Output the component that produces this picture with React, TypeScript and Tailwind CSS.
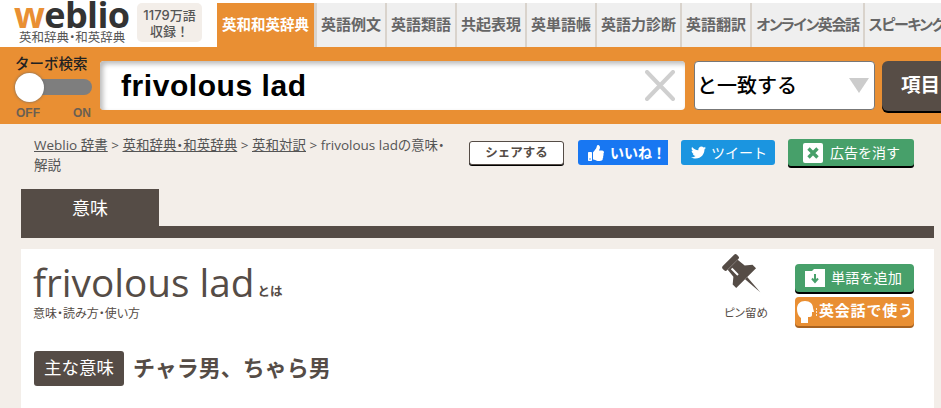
import { FaThumbsUp, FaTwitter } from 'react-icons/fa';

const jp = "font-['Inter','Noto_Sans_CJK_JP',sans-serif]";

const tabs = [
  { label: '英語例文', cls: '' },
  { label: '英語類語', cls: '' },
  { label: '共起表現', cls: '' },
  { label: '英単語帳', cls: '' },
  { label: '英語力診断', cls: '' },
  { label: '英語翻訳', cls: '' },
  { label: 'オンライン英会話', cls: 'tracking-[-1.4px]' },
  { label: 'スピーキング', cls: 'tracking-[-1.4px]' },
];

function Header() {
  return (
    <div className="flex h-[47px] bg-white">
      <div className="w-[137px] shrink-0 pl-[14px]">
        <div className="h-[31px] font-['Open_Sans',sans-serif] text-[36px] leading-[29px] font-bold tracking-[-0.6px] text-[#333]">
          <span className="text-[#e98f33]">w</span>eblio
        </div>
        <div className="pl-[5px] text-[12.5px] leading-[13px] whitespace-nowrap text-[#555] [font-feature-settings:'palt']">英和辞典・和英辞典</div>
      </div>
      <div className="mt-[3px] flex h-[39px] w-[65px] shrink-0 flex-col items-center justify-center rounded-[5px] bg-[#f3eee9] text-[13px] leading-[16px] font-medium text-[#555]">
        <span>1179万語</span>
        <span>収録！</span>
      </div>
      <div className="mt-[3px] ml-[15px] flex h-[44px] min-w-0 flex-1 overflow-hidden">
        <div className="flex w-[97px] shrink-0 items-center justify-center bg-[#e98f33] text-[14.5px] font-bold whitespace-nowrap text-white">
          英和和英辞典
        </div>
        <div className="w-[3px] shrink-0 bg-[#d9d3cc]" />
        {tabs.map((t) => (
          <div
            key={t.label}
            className={`flex shrink-0 items-center border-r-2 border-[#d9d3cc] bg-[#efefef] px-[4px] text-[15px] font-bold whitespace-nowrap text-[#666] [font-feature-settings:'palt'] ${t.cls}`}
          >
            {t.label}
          </div>
        ))}
      </div>
    </div>
  );
}

function SearchBar() {
  return (
    <div className="flex h-[77px] overflow-hidden bg-[#e98f33] pt-[14px] pl-[15px]">
      <div className="w-[85px] shrink-0">
        <div className="-mt-[6px] h-[18px] text-[14.5px] leading-[18px] font-medium whitespace-nowrap text-[#222]">ターボ検索</div>
        <div className="relative mt-[6px] h-[16px] w-[77px] rounded-full bg-[#7e7e7e]">
          <div className="absolute top-[-6px] left-0 h-[29px] w-[29px] rounded-full bg-white shadow-[0_0_3px_#666]" />
        </div>
        <div className="mt-[11px] flex w-[76px] justify-between pl-[1px] font-['Liberation_Sans',sans-serif] text-[12px] leading-[14px] font-bold text-[#6b5f52]">
          <span>OFF</span>
          <span>ON</span>
        </div>
      </div>
      <div className="flex h-[49px] w-[585px] shrink-0 items-center justify-between rounded-[4px] bg-white pr-[10px] pl-[21px] shadow-[inset_3px_3px_5px_#bbb]">
        <span className="font-['Liberation_Sans',sans-serif] text-[30px] font-bold tracking-[0.55px] text-black">frivolous lad</span>
        <svg width="30" height="31" viewBox="0 0 30 31" fill="none">
          <path d="M2 2 L28 29 M28 2 L2 29" stroke="#cfcfcf" strokeWidth="4" strokeLinecap="round" />
        </svg>
      </div>
      <div className="ml-[9px] flex h-[49px] w-[181px] shrink-0 items-center justify-between rounded-[4px] border border-[#777] bg-white pr-[5px] pl-[2px]">
        <span className="text-[20px] font-medium text-black">と一致する</span>
        <svg width="20" height="15" viewBox="0 0 20 15">
          <path d="M0 0 H20 L10 15 Z" fill="#cccccc" />
        </svg>
      </div>
      <div className="ml-[7px] flex h-[50px] w-[90px] shrink-0 items-center rounded-[6px] bg-[#574d46] pl-[19px] text-[19.5px] font-bold text-white shadow-[0_2px_0_#000]">
        項目
      </div>
    </div>
  );
}

function BreadcrumbRow() {
  return (
    <div className="flex h-[65px] pl-[34px]">
      <div className="mt-[11px] w-[418px] shrink-0 font-['Open_Sans','Noto_Sans_CJK_JP',sans-serif] text-[13.5px] leading-[20px] text-[#555] [font-feature-settings:'palt']">
        <span className="underline">Weblio 辞書</span> &gt; <span className="underline">英和辞典・和英辞典</span> &gt;{' '}
        <span className="underline">英和対訳</span> &gt; frivolous ladの意味・解説
      </div>
      <div className="mt-[15px] ml-[17px] flex h-[29px] items-start">
        <div className="mt-[2px] flex h-[24px] w-[95px] items-center justify-center rounded-[3px] border border-[#554c46] bg-white text-[12.5px] font-bold text-[#554c46] shadow-[0_1px_0_#000]">
          シェアする
        </div>
        <div className="mt-[1px] ml-[14px] flex h-[25px] w-[90px] items-center gap-[6px] rounded-l-[3px] bg-[#1877f2] pl-[10px] text-[14px] font-bold whitespace-nowrap text-white">
          <FaThumbsUp className="h-[16px] w-[16px]" />
          <span>いいね！</span>
        </div>
        <div className="mt-[1px] ml-[13px] flex h-[25px] w-[94px] items-center gap-[5px] rounded-[3px] bg-[#1b95e0] pl-[10px] text-[14px] text-white">
          <FaTwitter className="h-[15px] w-[15px]" />
          <span>ツイート</span>
        </div>
        <div className="ml-[13px] flex h-[27px] w-[126px] items-center gap-[7px] rounded-[3px] bg-[#47a06a] pl-[15px] text-[14px] text-white shadow-[0_2px_0_#000]">
          <span className="flex h-[20px] w-[20px] items-center justify-center rounded-[2px] bg-white">
            <svg width="14" height="14" viewBox="0 0 14 14" fill="none">
              <path d="M2.5 2.5 L11.5 11.5 M11.5 2.5 L2.5 11.5" stroke="#47a06a" strokeWidth="3.4" />
            </svg>
          </span>
          <span>広告を消す</span>
        </div>
      </div>
    </div>
  );
}

function MeaningTabs() {
  return (
    <div className="mr-[7px] ml-[21px]">
      <div className="flex h-[37px] w-[138px] items-center justify-center bg-[#554c46] pt-[2px] text-[18px] text-white">意味</div>
      <div className="h-[12px] bg-[#554c46]" />
    </div>
  );
}

function PinIcon() {
  return (
    <svg width="36" height="36" viewBox="0 0 36 36" className="mr-[4px] overflow-visible">
      <g transform="rotate(-45 18 18)">
        <rect x="8" y="-4" width="20" height="6" rx="2" fill="#554c46" />
        <path d="M11 2 H25 L26 11 L32 16 V21 H4 V16 L10 11 Z" fill="#554c46" />
        <path d="M16.5 21 H19.5 L18 41 Z" fill="#554c46" />
        <rect x="13.5" y="4" width="2" height="9" fill="#fff" />
      </g>
    </svg>
  );
}

function Card() {
  return (
    <div className="mt-[11px] mr-[7px] ml-[21px] flex h-[159px] justify-between bg-white pl-[12px] text-[#554c46]">
      <div>
        <div className="mt-[11px] flex h-[45px] items-end">
          <span className="font-['Open_Sans',sans-serif] text-[38.7px] leading-[45px]">frivolous lad</span>
          <span className="mb-[3px] ml-[3px] text-[12.5px] leading-[20px] font-bold">とは</span>
        </div>
        <div className="text-[12px] leading-[18px] [font-feature-settings:'palt']">意味・読み方・使い方</div>
        <div className="mt-[28px] flex items-center">
          <span className="ml-[1px] flex h-[35px] w-[90px] items-center justify-center rounded-[3px] bg-[#554c46] text-[17.5px] text-white">
            主な意味
          </span>
          <span className="ml-[9px] text-[22px] font-bold">チャラ男、ちゃら男</span>
        </div>
      </div>
      <div className="flex pr-[20px]">
        <div className="mt-[9px] flex w-[44px] flex-col items-center">
          <PinIcon />
          <span className="mt-[10px] text-[11.5px] leading-[18px] whitespace-nowrap [font-feature-settings:'palt']">ピン留め</span>
        </div>
        <div className="mt-[15px] ml-[27px] w-[119px]">
          <div className="flex h-[28px] items-center gap-[6px] rounded-[4px] bg-[#47a06a] pl-[10px] text-[14.2px] text-white shadow-[0_2px_0_#000]">
            <svg width="20" height="18" viewBox="0 0 20 18">
              <path d="M0 2 H7 L9 0 H20 V18 H0 Z" fill="#fff" />
              <path d="M10 5 V12 M7 9.5 L10 13 L13 9.5" fill="none" stroke="#47a06a" strokeWidth="2" />
            </svg>
            <span>単語を追加</span>
          </div>
          <div className="mt-[5px] flex h-[29px] items-center rounded-[4px] bg-[#e98f33] pl-[2px] text-[15px] font-bold whitespace-nowrap text-white shadow-[0_2px_0_#a86220]">
            <svg width="22" height="22" viewBox="0 0 22 22" className="shrink-0">
              <path d="M8 0 C13 0 16 3 16 7 L17 11 H15 V14 C15 16 13 16 11 16 V22 H4 V17 C1 15 0 11 0 8 C0 3 3 0 8 0 Z" fill="#fff" />
              <path d="M19 8 H20 M19 11 H20 M19 14 H20" stroke="#fff" strokeWidth="1.5" />
            </svg>
            <span className="tracking-[0.8px]">英会話で使う</span>
          </div>
        </div>
      </div>
    </div>
  );
}

export default function App() {
  return (
    <div className={`h-[408px] w-[941px] overflow-hidden bg-[#f3eee9] ${jp}`}>
      <Header />
      <SearchBar />
      <BreadcrumbRow />
      <MeaningTabs />
      <Card />
    </div>
  );
}
